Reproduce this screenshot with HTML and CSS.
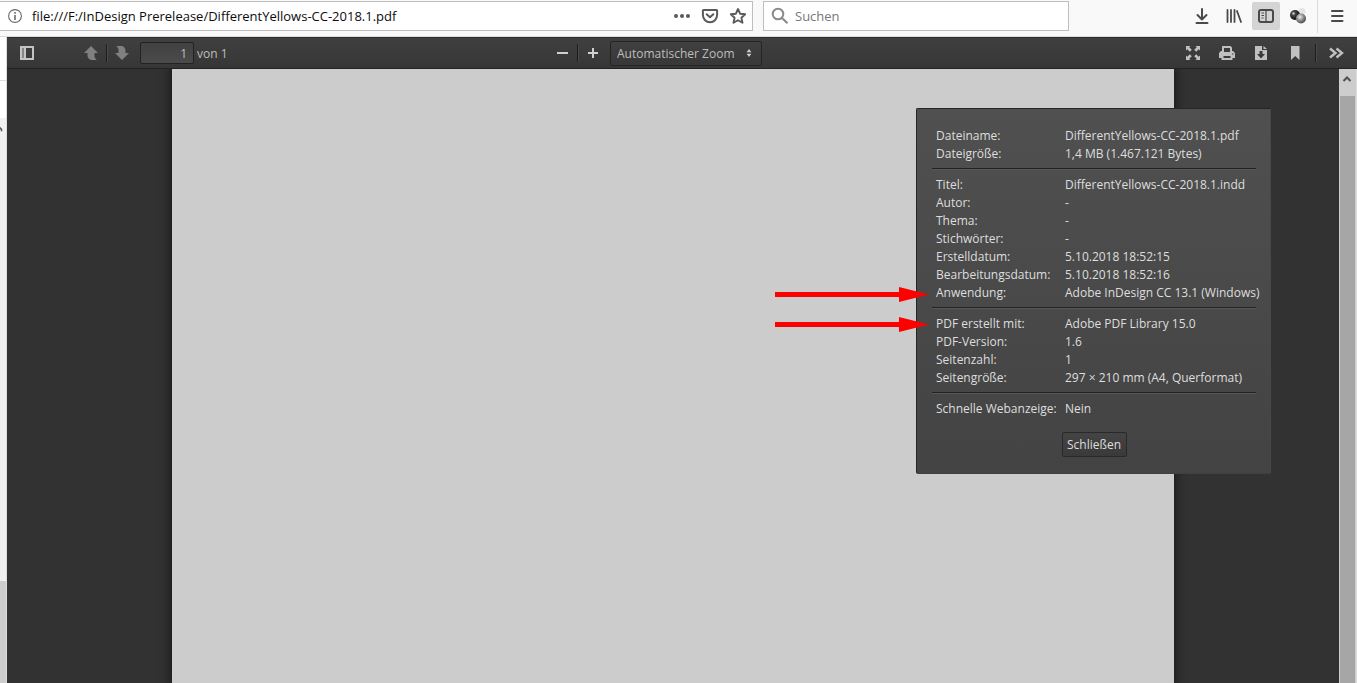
FILE: index.html
```
<!DOCTYPE html>
<html lang="de">
<head>
<meta charset="utf-8">
<title>DifferentYellows-CC-2018.1.pdf</title>
<link rel="stylesheet" href="styles.css">
</head>
<body>
<header class="chrome">
  <div class="urlbar">
    <svg class="info" viewBox="0 0 14 14" aria-hidden="true"><circle cx="7" cy="7" r="6.4" fill="none" stroke="#6a6a6a" stroke-width="1.1"/><path d="M6.2 6h1.6v5H6.2zM6.2 3h1.6v1.7H6.2z" fill="#6a6a6a"/></svg>
    <input class="url" type="text" aria-label="Adresse" value="file:///F:/InDesign Prerelease/DifferentYellows-CC-2018.1.pdf">
    <button class="page-action" aria-label="Seitenaktionen"><svg viewBox="0 0 18 18" fill="#5a5a5a"><circle cx="3" cy="9" r="2"/><circle cx="9" cy="9" r="2"/><circle cx="15" cy="9" r="2"/></svg></button>
    <button class="page-action" aria-label="Pocket"><svg viewBox="0 0 18 18" fill="none" stroke="#5a5a5a" stroke-width="2" stroke-linejoin="round" stroke-linecap="round"><path d="M2.5 3h13c.4 0 .6.200.6.600V8c0 4.200-3.200 7.200-7.100 7.200S1.900 12.200 1.900 8V3.600c0-.4.200-.6.600-.6z"/><path d="M5.700 7.200 9 10.300l3.300-3.100"/></svg></button>
    <button class="page-action" aria-label="Lesezeichen setzen"><svg viewBox="0 0 18 18" fill="none" stroke="#5a5a5a" stroke-width="1.900" stroke-linejoin="round"><path d="M9 2l2.100 4.700 5.100.5-3.800 3.500 1.100 5.100L9 13.200l-4.500 2.600 1.100-5.100L1.800 7.200l5.100-.5z"/></svg></button>
  </div>
  <div class="search">
    <svg viewBox="0 0 18 18" fill="none" stroke="#8a8a8a" aria-hidden="true"><circle cx="7" cy="7" r="5.300" stroke-width="2"/><path d="M11 11l5.500 5.200" stroke-width="2.200"/></svg>
    <input type="search" placeholder="Suchen" aria-label="Suchen">
  </div>
  <nav class="tools" aria-label="Werkzeuge">
    <button aria-label="Downloads"><svg viewBox="0 0 16 16" fill="none" stroke="#4a4a4a" stroke-width="2" stroke-linecap="round" stroke-linejoin="round"><path d="M8 1v10M3.500 7 8 11.500 12.500 7M2.500 15h11"/></svg></button>
    <button aria-label="Bibliothek"><svg viewBox="0 0 16 16" fill="none" stroke="#4a4a4a" stroke-width="1.800" stroke-linecap="round"><path d="M1.500 2v12M5 2v12M8.500 2v12M11 3l4 11"/></svg></button>
    <button class="active" aria-label="Sidebar"><svg viewBox="0 0 16 16" fill="none" stroke="#4a4a4a"><rect x="1" y="2" width="14" height="12" rx="2" stroke-width="2"/><path d="M8 2v12M3.500 5H6M3.500 7.500H6M3.500 10H5.500" stroke-width="1.200"/></svg></button>
    <button aria-label="Erweiterung"><svg viewBox="1 1 16 16"><defs><radialGradient id="dark" cx=".35" cy=".35" r=".6"><stop offset="0" stop-color="#ddd"/><stop offset=".35" stop-color="#444"/><stop offset="1" stop-color="#111"/></radialGradient><radialGradient id="gray" cx=".4" cy=".35" r=".6"><stop offset="0" stop-color="#eee"/><stop offset=".5" stop-color="#999"/><stop offset="1" stop-color="#555"/></radialGradient></defs><circle cx="13" cy="4.500" r="3.500" fill="#e4e4e4"/><circle cx="6" cy="8" r="5" fill="url(#dark)"/><circle cx="12" cy="11.500" r="5" fill="url(#gray)"/></svg></button>
    <span class="divider"></span>
    <button aria-label="Menü"><svg viewBox="0 0 16 16" stroke="#4a4a4a" stroke-width="2" stroke-linecap="round"><path d="M3 3h10.500M3 8h10.500M3 13h10.500"/></svg></button>
  </nav>
</header>
<div class="content">
  <aside class="edge"><span class="edge-tab"></span><span class="edge-list"><svg viewBox="0 0 4 6" aria-hidden="true"><path d="M0 0l3 3v3H1V4L0 3z" fill="#555"/></svg></span><span class="edge-foot"></span></aside>
  <main class="viewer">
    <div class="toolbar">
      <div class="group left">
        <button class="side" aria-label="Sidebar umschalten"><svg viewBox="0 0 16 16"><path fill="#c3c3c3" fill-rule="evenodd" d="M1 1h14v14H1zM3 3v10h2V3zM7 3v10h6V3z"/><path fill="#858585" d="M3 3h2v10H3z"/></svg></button>
        <button aria-label="Zurück"><svg viewBox="0 0 16 16"><path fill="#808080" d="M8 1l7 7h-3.500v3c0 1.800 1 3 2.500 4H9.500C6.500 15 4.500 13.500 4.500 10V8H1z"/></svg></button>
        <span class="sep"></span>
        <button aria-label="Vor"><svg viewBox="0 0 16 16"><path fill="#808080" d="M8 15l7-7h-3.500V6c0-3.500-2-5-5-5H2c1.500 1 2.500 2.200 2.500 4v3H1z"/></svg></button>
        <input class="page-number" type="text" value="1" aria-label="Seite">
        <span class="page-count">von 1</span>
      </div>
      <div class="group">
        <button aria-label="Verkleinern"><svg viewBox="0 0 16 16"><path fill="#d0d0d0" d="M3 7h11v2H3z"/></svg></button>
        <span class="sep"></span>
        <button aria-label="Vergrößern"><svg viewBox="0 0 16 16"><path fill="#d0d0d0" d="M3 7h4V3h2v4h4v2H9v4H7V9H3z"/></svg></button>
        <span class="zoom"><select aria-label="Zoom"><option>Automatischer Zoom</option></select><svg viewBox="0 0 6 10" fill="#d0d0d0" aria-hidden="true"><path d="M3 0l3 4H0zM0 6h6L3 10z"/></svg></span>
      </div>
      <div class="group right">
        <button aria-label="Präsentationsmodus"><svg viewBox="0 0 16 16" fill="#c0c0c0"><path d="M1 1h4.500L4.200 2.300l2.600 2.500-2 2L2.300 4.200 1 5.500zM15 1v4.500l-1.300-1.300-2.500 2.600-2-2 2.600-2.500L10.500 1zM1 15v-4.500l1.300 1.300 2.500-2.600 2 2-2.600 2.500L5.500 15zM15 15h-4.500l1.300-1.300-2.600-2.500 2-2 2.500 2.600 1.300-1.300z"/></svg></button>
        <button aria-label="Drucken"><svg viewBox="0 0 16 16"><path fill="#c0c0c0" fill-rule="evenodd" d="M3.500 1h8L13 2.500V6h1l2 2v5h-2.500v2h-11v-2H0V8l2-2h1V1.500zM5 3v4h6V3zM4.500 11v2h7v-2zM13 8.500v1h1.500v-1z"/></svg></button>
        <button aria-label="Herunterladen"><svg viewBox="0 0 16 16"><path fill="#c0c0c0" fill-rule="evenodd" d="M2 1h7v4h5v10H2zM6.500 6v3H4l4 4.500L12 9H9.500V6z"/><path fill="#c0c0c0" d="M10.500 1 14 4h-3.500z"/></svg></button>
        <button aria-label="Aktuelle Ansicht"><svg viewBox="0 0 16 16"><path fill="#c0c0c0" d="M4 1h8.500v14L8.200 11 4 15z"/></svg></button>
        <span class="sep"></span>
        <button aria-label="Werkzeuge"><svg viewBox="0 0 16 16" fill="none" stroke="#c0c0c0" stroke-width="2.400"><path d="M2 3.500 7.500 8 2 12.500M8.500 3.500 14 8l-5.500 4.500"/></svg></button>
      </div>
    </div>
    <div class="stage">
      <div class="canvas"><div class="sheet"></div></div>
      <div class="scrollbar"><svg viewBox="0 0 10 6" fill="none" stroke="#505050" stroke-width="2" aria-hidden="true"><path d="M1.500 5 5 1.500 8.500 5"/></svg><span class="thumb"></span></div>
      <section class="dialog" role="dialog" aria-label="Dokumenteigenschaften">
        <dl>
          <dt>Dateiname:</dt><dd>DifferentYellows-CC-2018.1.pdf</dd>
          <dt>Dateigröße:</dt><dd>1,4 MB (1.467.121 Bytes)</dd>
        </dl>
        <dl>
          <dt>Titel:</dt><dd>DifferentYellows-CC-2018.1.indd</dd>
          <dt>Autor:</dt><dd>-</dd>
          <dt>Thema:</dt><dd>-</dd>
          <dt>Stichwörter:</dt><dd>-</dd>
          <dt>Erstelldatum:</dt><dd>5.10.2018 18:52:15</dd>
          <dt>Bearbeitungsdatum:</dt><dd>5.10.2018 18:52:16</dd>
          <dt>Anwendung:</dt><dd>Adobe InDesign CC 13.1 (Windows)</dd>
        </dl>
        <dl>
          <dt>PDF erstellt mit:</dt><dd>Adobe PDF Library 15.0</dd>
          <dt>PDF-Version:</dt><dd>1.6</dd>
          <dt>Seitenzahl:</dt><dd>1</dd>
          <dt>Seitengröße:</dt><dd>297 × 210 mm (A4, Querformat)</dd>
        </dl>
        <dl>
          <dt>Schnelle Webanzeige:</dt><dd>Nein</dd>
        </dl>
        <button class="close">Schließen</button>
        <svg class="arrows" viewBox="0 0 154 46" fill="#f00" aria-hidden="true"><path d="M0 5h124V0l30 7.500L124 15v-5H0zM0 35h124v-5l30 7.500-30 7.500v-5H0z"/></svg>
      </section>
    </div>
  </main>
</div>
</body>
</html>
```
FILE: styles.css
```
* { box-sizing: border-box; }
body {
  margin: 0;
  height: 100vh;
  display: flex;
  flex-direction: column;
  overflow: hidden;
  background: #fff;
  font: 12px "Open Sans", "Noto Sans", sans-serif;
}
button, input, select {
  margin: 0;
  padding: 0;
  border: 0;
  background: none;
  font: inherit;
  color: inherit;
}
button { display: flex; align-items: center; justify-content: center; flex: none; }
svg { display: block; flex: none; width: 16px; height: 16px; }

.chrome {
  display: flex;
  flex: none;
  height: 37px;
  padding: 1px 6px 6px 0;
  background: #f9f9f9;
  border-bottom: 1px solid #dcdcdc;
}
.urlbar, .search {
  display: flex;
  align-items: center;
  height: 30px;
  background: #fff;
  border: 1px solid #bebebe;
}
.urlbar { flex: 1; border-left: 0; padding: 0 4px 0 8px; }
.urlbar .info { width: 14px; height: 14px; }
.url { flex: 1; min-width: 0; margin-left: 10px; font-size: 13px; color: #0c0c0d; }
.page-action { width: 28px; height: 28px; }
.page-action svg { width: 18px; height: 18px; }
.page-action:last-child { width: 20px; margin-left: 4px; }
.search { width: 306px; margin: 0 119px 0 10px; padding: 0 7px; gap: 6px; }
.search svg { width: 18px; height: 18px; }
.search input { flex: 1; min-width: 0; font-size: 13px; }
.search input::placeholder { color: #777; opacity: 1; }
.tools { display: flex; align-items: center; gap: 4px; }
.tools button { width: 28px; height: 28px; border-radius: 2px; }
.tools .active { background: #d4d4d4; }
.divider { width: 1px; height: 34px; margin: 0 1px; background: #dcdcdc; }

.content { flex: 1; min-height: 0; display: flex; }
.edge { width: 7px; flex: none; display: flex; flex-direction: column; border-right: 1px solid #ddd; }
.edge-tab { height: 44px; border-bottom: 1px solid #ddd; }
.edge-list { flex: 1; margin-top: 37px; padding-top: 8px; background: #f0f0f0; }
.edge-list svg { width: 3px; height: 6px; }
.edge-foot { height: 102px; background: #cdcdcd; }
.viewer { flex: 1; min-width: 0; display: flex; flex-direction: column; }

.toolbar {
  flex: none;
  height: 32px;
  display: grid;
  grid-template-columns: 40% auto 1fr;
  background: linear-gradient(#404040, #363636);
  box-shadow: inset 0 1px #2d2d2d, inset 0 -1px #222;
  color: #bdbdbd;
}
.group { display: flex; align-items: center; }
.group button { width: 30px; height: 30px; }
.left { padding-left: 5px; }
.left .side { margin-right: 34px; }
.right { justify-content: flex-end; padding-right: 4px; }
.right button { width: 34px; }
.right .sep { margin: 0 3px; }
.sep { width: 1px; height: 18px; background: #1c1c1c; box-shadow: 1px 0 #4a4a4a; }
.page-number {
  width: 54px;
  height: 22px;
  margin: 0 3px;
  padding: 0 6px;
  text-align: right;
  background: linear-gradient(#414141, #4b4b4b);
  border: 1px solid #222;
  border-radius: 2px;
}
.zoom { display: flex; align-items: center; margin-left: 2px; }
.zoom select {
  appearance: none;
  width: 152px;
  height: 25px;
  padding: 0 6px;
  background: linear-gradient(#404040, #383838);
  border: 1px solid #242424;
  border-radius: 2px;
}
.zoom svg { width: 6px; height: 8px; margin-left: -16px; pointer-events: none; }

.stage { position: relative; flex: 1; min-height: 0; display: flex; background: #323232; }
.canvas { flex: 1; display: flex; justify-content: center; overflow: hidden; }
.sheet { width: 75.2%; background: #ccc; box-shadow: 0 0 9px 2px #181818; }
.scrollbar {
  width: 18px;
  display: flex;
  flex-direction: column;
  align-items: center;
  padding: 7px 1px 0 0;
  background: #cdcdcd;
  border-right: 1px solid #ddd;
}
.scrollbar svg { width: 10px; height: 6px; }
.thumb { flex: 1; align-self: stretch; margin: 14px 0 0 1px; background: #a6a6a6; }

.dialog {
  position: absolute;
  top: 39px;
  right: 86px;
  width: 355px;
  padding: 18px 14px 16px 15px;
  color: #dedede;
  background: linear-gradient(#505050, #434343);
  border: 1px solid #262626;
  border-right-color: #484848;
  border-bottom-color: #404040;
  border-radius: 2px;
}
dl {
  display: grid;
  grid-template-columns: 129px 1fr;
  margin: 0;
  padding: 0 0 0 4px;
  line-height: 18px;
  white-space: nowrap;
}
dl + dl {
  margin-top: 5px;
  padding-top: 7px;
  border-top: 1px solid #222;
  box-shadow: inset 0 1px #585858;
}
dd { margin: 0; }
.close {
  width: 65px;
  height: 25px;
  margin: 14px auto 0;
  background: linear-gradient(#444, #3a3a3a);
  border: 1px solid #292929;
  border-radius: 2px;
}
.arrows { position: absolute; top: 178px; left: -142px; width: 154px; height: 46px; }
```
